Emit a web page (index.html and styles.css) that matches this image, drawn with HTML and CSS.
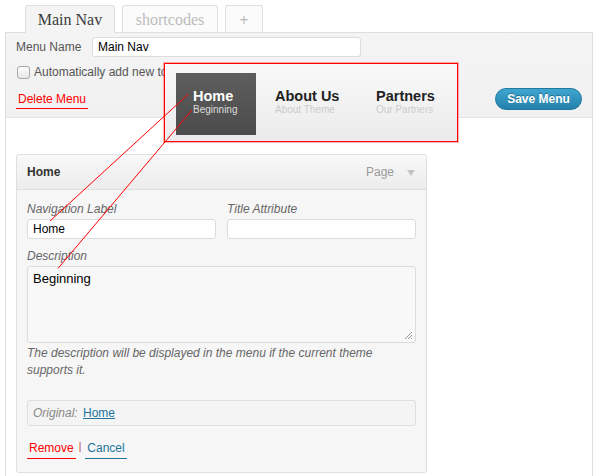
FILE: index.html
```html
<!DOCTYPE html>
<html>
<head>
<meta charset="utf-8">
<link rel="stylesheet" href="styles.css">
</head>
<body>
<div class="wrap">
  <div class="tabs">
    <div class="tab tab-active">Main Nav</div>
    <div class="tab tab-wide">shortcodes</div>
    <div class="tab tab-plus">+</div>
  </div>
  <div class="head">
    <div class="row row-name">
      <label class="name-label">Menu Name</label>
      <div class="input name-input">Main Nav</div>
    </div>
    <div class="row row-check">
      <span class="checkbox"></span>
      <span class="check-text">Automatically add new top-level pages</span>
    </div>
    <div class="row row-actions">
      <a class="delete">Delete Menu</a>
      <span class="save">Save Menu</span>
    </div>
  </div>
  <div class="body">
    <div class="item">
      <div class="item-head">
        <span class="item-title">Home</span>
        <span class="item-type">Page
          <svg class="arrow" width="8" height="6" viewBox="0 0 8 6"><path d="M0 0 H8 L4 6 Z" fill="#c4c4c4"/></svg>
        </span>
      </div>
      <div class="item-body">
        <div class="cols">
          <div class="field">
            <div class="flabel">Navigation Label</div>
            <div class="input field-input">Home</div>
          </div>
          <div class="field">
            <div class="flabel">Title Attribute</div>
            <div class="input field-input"></div>
          </div>
        </div>
        <div class="flabel desc-label">Description</div>
        <div class="textarea">Beginning
          <svg class="grip" width="9" height="9" viewBox="0 0 9 9"><path d="M8 1 L1 8 M8 4 L4 8 M8 7 L7 8" stroke="#999" stroke-width="1"/></svg>
        </div>
        <p class="help">The description will be displayed in the menu if the current theme supports it.</p>
        <div class="original"><em>Original:</em> <a class="orig-link">Home</a></div>
        <div class="actions">
          <a class="remove">Remove</a><span class="sep">|</span><a class="cancel">Cancel</a>
        </div>
      </div>
    </div>
  </div>
</div>

<div class="preview">
  <div class="pv-item pv-current">
    <div class="pv-title">Home</div>
    <div class="pv-sub">Beginning</div>
  </div>
  <div class="pv-item pv-about">
    <div class="pv-title">About Us</div>
    <div class="pv-sub">About Theme</div>
  </div>
  <div class="pv-item">
    <div class="pv-title">Partners</div>
    <div class="pv-sub">Our Partners</div>
  </div>
</div>

<svg class="pointers" width="597" height="476" viewBox="0 0 597 476">
  <line x1="188.5" y1="94" x2="50" y2="221" stroke="#f00" stroke-width="1"/>
  <line x1="192" y1="110" x2="58" y2="268.5" stroke="#f00" stroke-width="1"/>
</svg>
</body>
</html>
```

FILE: styles.css
```css
html, body {
  margin: 0;
  padding: 0;
  background: #fff;
  font-family: "Liberation Sans", Arial, sans-serif;
  font-size: 12px;
  color: #333;
  overflow: hidden;
  height: 476px;
}

.wrap {
  padding: 5px 4px 0 5px;
  height: 471px;
  display: flex;
  flex-direction: column;
}

.tabs {
  display: flex;
  gap: 7px;
  padding-left: 20px;
  height: 28px;
  margin-bottom: -1px;
  position: relative;
  z-index: 1;
}

.tab {
  box-sizing: border-box;
  height: 28px;
  width: 90px;
  border: 1px solid #dfdfdf;
  border-bottom: none;
  border-radius: 3px 3px 0 0;
  background: #fbfbfb;
  font-family: "Liberation Serif", Georgia, serif;
  font-size: 16px;
  line-height: 27px;
  text-align: center;
  color: #bbb;
}

.tab-active {
  background: #f4f4f4;
  color: #3a3a3a;
  height: 28px;
}

.tab-wide { width: 96px; height: 27px; }
.tab-plus { width: 38px; height: 27px; font-family: "Liberation Sans", Arial, sans-serif; font-size: 16px; }

.head {
  box-sizing: border-box;
  height: 86px;
  border: 1px solid #dfdfdf;
  border-bottom-color: #e3e3e3;
  background: linear-gradient(#f4f4f4, #f1f1f1);
  padding: 4px 10px 0 10px;
}

.row { display: flex; align-items: center; }

.row-name { height: 20px; }

.name-label {
  width: 76px;
  color: #555;
  line-height: 20px;
}

.input {
  box-sizing: border-box;
  height: 20px;
  background: #fff;
  border: 1px solid #dcdcdc;
  border-radius: 3px;
  font-size: 12px;
  line-height: 18px;
  padding: 0 5px;
  color: #000;
}

.name-input { width: 269px; }

.row-check {
  margin-top: 7px;
  height: 16px;
  padding-left: 1px;
}

.checkbox {
  box-sizing: border-box;
  width: 13px;
  height: 13px;
  border: 1px solid #a9a9a9;
  border-radius: 3px;
  background: linear-gradient(#fdfdfd, #e6e6e6);
  margin-right: 4px;
}

.check-text { color: #555; font-size: 12px; white-space: nowrap; }

.row-actions {
  margin-top: 7px;
  height: 22px;
  justify-content: space-between;
}

.delete {
  color: #f00;
  line-height: 16px;
  padding: 0 2px 1px 2px;
  border-bottom: 1px solid #f00;
  margin-top: 3px;
}

.save {
  box-sizing: border-box;
  width: 87px;
  height: 22px;
  border-radius: 11px;
  background: linear-gradient(#3fa6cf, #2381ab);
  border: 1px solid #2279a0;
  color: #fff;
  font-weight: bold;
  font-size: 12px;
  line-height: 20px;
  text-align: center;
  text-shadow: 0 -1px 0 rgba(0,0,0,0.3);
  margin-top: 1px;
}

.body {
  flex: 1;
  border-left: 1px solid #dfdfdf;
  border-right: 1px solid #dfdfdf;
  padding: 36px 10px 0 10px;
  background: #fff;
}

.item {
  width: 411px;
  box-sizing: border-box;
  border: 1px solid #dfdfdf;
  border-radius: 3px;
  background: #f6f6f6;
}

.item-head {
  height: 34px;
  border-bottom: 1px solid #dfdfdf;
  background: linear-gradient(#f9f9f9, #ececec);
  display: flex;
  align-items: center;
  justify-content: space-between;
  padding: 0 11px 0 10px;
  border-radius: 3px 3px 0 0;
}

.item-title { font-weight: bold; color: #333; }

.item-type {
  color: #999;
  font-size: 12px;
  display: flex;
  align-items: center;
  gap: 13px;
}

.arrow { display: block; margin-top: 1px; }

.item-body { padding: 11px 10px 13px 10px; }

.cols { display: flex; gap: 11px; }
.field { width: 189px; }

.flabel {
  font-style: italic;
  color: #666;
  line-height: 16px;
}

.field-input {
  margin-top: 2px;
  width: 189px;
  font-size: 12px;
}

.desc-label { margin-top: 9px; }

.textarea {
  position: relative;
  box-sizing: border-box;
  margin-top: 2px;
  height: 77px;
  background: #f8f8f8;
  border: 1px solid #dcdcdc;
  border-radius: 3px;
  font-size: 13px;
  color: #000;
  padding: 3px 5px;
  line-height: 17px;
}

.grip { position: absolute; right: 2px; bottom: 2px; }

.help {
  margin: 2px 0 0 0;
  font-style: italic;
  color: #666;
  line-height: 17px;
}

.original {
  box-sizing: border-box;
  margin-top: 21px;
  height: 26px;
  border: 1px solid #dfdfdf;
  border-radius: 3px;
  padding: 0 5px;
  line-height: 24px;
  color: #888;
  background: #f4f4f4;
}

.orig-link {
  color: #21759b;
  text-decoration: underline;
  margin-left: 2px;
}

.actions {
  margin-top: 14px;
  display: flex;
  align-items: flex-start;
}

.remove, .cancel {
  line-height: 16px;
  padding: 0 2px 2px 2px;
}

.remove { color: #f00; border-bottom: 1px solid #f00; }
.cancel { color: #21759b; border-bottom: 1px solid #21759b; }

.sep {
  color: #a33;
  font-size: 10px;
  line-height: 14px;
  margin: 0 4px 0 3px;
}

.preview {
  position: absolute;
  left: 164px;
  top: 63px;
  width: 294px;
  height: 79px;
  box-sizing: border-box;
  border: 1px solid #ff0000;
  box-shadow: 0 0 0 1px rgba(255, 0, 0, 0.3);
  background: linear-gradient(#f9f9f9, #ebebeb);
  padding: 9px 0 0 11px;
  display: flex;
  z-index: 2;
}

.pv-item {
  box-sizing: border-box;
  height: 62px;
  padding: 16px 0 0 17px;
  margin-right: 2px;
}

.pv-current {
  width: 80px;
  background: linear-gradient(#5e5e5e, #4b4b4b);
}

.pv-about { width: 99px; }

.pv-title {
  font-weight: bold;
  font-size: 14.5px;
  line-height: 15px;
  color: #222;
}

.pv-sub {
  font-size: 10px;
  line-height: 12px;
  color: #ccc;
  margin-top: 0;
}

.pv-current .pv-title { color: #fff; }
.pv-current .pv-sub { color: #ddd; }

.pointers {
  position: absolute;
  left: 0;
  top: 0;
  z-index: 3;
  pointer-events: none;
}
```
